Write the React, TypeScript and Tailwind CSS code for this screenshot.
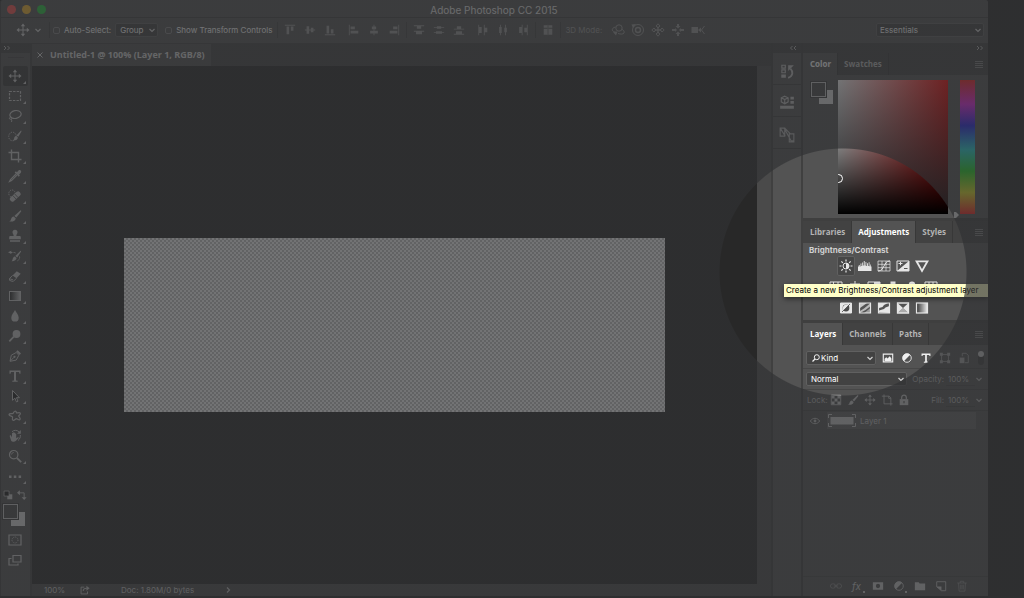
import { ReactNode } from "react";
import { clsx } from "clsx";

interface IconProps {
  children: ReactNode;
  size?: string;
  className?: string;
}

// every icon is drawn on a 14x14 grid
function Icon({ children, size = "size-3.5", className }: IconProps) {
  return (
    <svg
      viewBox="0 0 14 14"
      className={clsx("shrink-0", size, className)}
      fill="none"
      stroke="currentColor"
      strokeWidth="1"
      aria-hidden="true"
    >
      {children}
    </svg>
  );
}

const solid = { fill: "currentColor", stroke: "none" };

const movePath = (
  <>
    <path d="M7 2v10M2 7h10" />
    <path {...solid} d="M7 0.5l2.2 2.7H4.8zM7 13.5l2.2-2.7H4.8zM0.5 7l2.7-2.2v4.4zM13.5 7l-2.7-2.2v4.4z" />
  </>
);

const brushPath = (
  <>
    <path {...solid} d="M12.6 1.2c.7.4.7 1 .3 1.6L8.4 8.6 6.3 7z" />
    <path {...solid} d="M5.6 7.5l2.1 1.7c-.2 2.4-2.4 3.8-6.6 3.3 1.6-.6 1.6-1.3 2-2.6.4-1.3 1.3-2.2 2.5-2.4z" />
  </>
);

const tools: { name: string; icon: ReactNode }[] = [
  { name: "Move", icon: movePath },
  {
    name: "Marquee",
    icon: <rect x="1.5" y="2.5" width="11" height="9" strokeDasharray="2.4 1.2" strokeWidth="1.2" />,
  },
  {
    name: "Lasso",
    icon: (
      <>
        <ellipse cx="7.5" cy="5.5" rx="5.7" ry="3.9" transform="rotate(-12 7.5 5.5)" strokeWidth="1.2" />
        <path d="M2.5 8.2c-1.3.3-1.6 1.8-.2 2 1.5.2 2-1 1.2-1.5M3 10c.8.6 1 1.8.4 3" />
      </>
    ),
  },
  {
    name: "Quick Selection",
    icon: (
      <>
        <ellipse cx="4.5" cy="7.5" rx="3.8" ry="4.3" strokeDasharray="1.3 1.1" />
        <path {...solid} d="M13 1.5c.6.4.6 1 .2 1.5L10.3 7.8 8.5 6.4zM8 7l1.9 1.4c-.2 1.9-1.9 3.2-4.9 3 1.1-.7.9-1.2 1.2-2.3C6.5 8 7 7.3 8 7z" />
      </>
    ),
  },
  {
    name: "Crop",
    icon: <path d="M3.5 0.5v10h10M0.5 3.5h10v10" strokeWidth="1.4" />,
  },
  {
    name: "Eyedropper",
    icon: (
      <>
        <path d="M8 5L2.5 10.5 1.5 12.6l2.1-1L9 6.2" strokeWidth="1.2" />
        <path {...solid} d="M6.7 3.5l1.2-1.2 1 1 1.6-1.8c1-.9 2.6-.2 2.7 1.1 0 .5-.1.9-.5 1.3L11 5.5l.9 1-1.2 1.2z" />
      </>
    ),
  },
  {
    name: "Healing Brush",
    icon: (
      <>
        <ellipse cx="4" cy="4.5" rx="3.2" ry="3.5" strokeDasharray="1.2 1" />
        <rect {...solid} x="1" y="5" width="12.5" height="5" rx="2" transform="rotate(-42 7.2 7.5)" />
        <path d="M4.6 6.4l3.6 3.8M6.6 4.8l3.5 3.8" stroke="#535353" strokeWidth=".8" />
      </>
    ),
  },
  { name: "Brush", icon: brushPath },
  {
    name: "Clone Stamp",
    icon: (
      <path
        {...solid}
        d="M7 .8a2.5 2.5 0 0 1 2.5 2.5C9.5 4.9 8.3 5.3 8.3 7h3.2c.8 0 1.3.5 1.3 1.3v1.9H1.2V8.3C1.2 7.5 1.7 7 2.5 7h3.2c0-1.7-1.2-2.1-1.2-3.7A2.5 2.5 0 0 1 7 .8zM2 11.3h10v1.4H2z"
      />
    ),
  },
  {
    name: "History Brush",
    icon: (
      <>
        <path {...solid} d="M12.6 1.7c.6.4.6 1 .2 1.4L9.2 8.5 7.3 7zM6.7 7.6l1.9 1.5c-.3 2-2.2 3.4-5.3 3.2 1.2-.7 1-1.3 1.4-2.4.3-1.1 1-1.9 2-2.3zM0 3.3l3.3-1.5v3.3z" />
        <path d="M2.5 3.5h3.2c1 0 1.8.3 2.3.8M11.5 7.5c.4 1.8-.4 3.5-2 4.3" strokeDasharray="2 1" />
      </>
    ),
  },
  {
    name: "Eraser",
    icon: (
      <>
        <path d="M4.6 6.5l4.2-4.3 3.9 2.5-4.2 4.5z" {...solid} />
        <path d="M4.6 6.5L1.5 9.5v1.8l2.6 1h1.3l3.1-3.1M1.5 9.7l3.6 1.2" />
      </>
    ),
  },
  {
    name: "Gradient",
    icon: (
      <>
        <defs>
          <linearGradient id="toolGradient">
            <stop offset="0" stopColor="#222" />
            <stop offset="1" stopColor="#ccc" />
          </linearGradient>
        </defs>
        <rect x="1.5" y="2.5" width="11" height="9" fill="url(#toolGradient)" />
      </>
    ),
  },
  { name: "Blur", icon: <path {...solid} d="M7 1c1.3 2.9 3.7 4.8 3.7 7.7a3.7 3.9 0 0 1-7.4 0C3.3 5.8 5.7 3.9 7 1z" /> },
  {
    name: "Dodge",
    icon: (
      <>
        <circle {...solid} cx="8.5" cy="5" r="3.9" />
        <path d="M5.8 7.6L1.3 12.4" strokeWidth="1.7" />
      </>
    ),
  },
  {
    name: "Pen",
    icon: (
      <>
        <path d="M2 12.3L3.3 6.2 8.2 3.5l2.7 2.7-2.7 4.9zM2.3 12L6 8.3" />
        <circle {...solid} cx="6.5" cy="7.8" r="1.1" />
        <path d="M8.9 1.9l3.4 3.4" strokeWidth="2" />
      </>
    ),
  },
  {
    name: "Type",
    icon: <path {...solid} d="M1.5 1.5h11v3.3h-1l-.5-1.7H8v8.3l1.7.4v.9H4.3v-.9l1.7-.4V3.1H3l-.5 1.7h-1z" />,
  },
  {
    name: "Path Selection",
    icon: <path d="M4.5 1.5v9.8l2.3-2.2 1.7 3.8 1.5-.7-1.6-3.5h3z" fill="#1e1e1e" />,
  },
  {
    name: "Custom Shape",
    icon: (
      <path
        d="M6.5 2.5c1.3-.8 1.9.2 2 1.4.8.3 2.8-.8 3.8.2.9 1.3-1.5 1.9-1.7 2.9.2 1 2.2 2 1.5 3.4-1 1.3-2.5-.6-3.6-.8-1.3.2-2 2.1-3.5 1.7-1.5-.7-.1-2.5-.5-3.5C3.8 7 .9 7 1 5.500c.4-1.500 3-.5 3.900-1 .8-.6.7-1.500 1.600-2z"
        strokeWidth="1.2"
      />
    ),
  },
  {
    name: "Rotate View",
    icon: (
      <>
        <path {...solid} d="M3 6.5l1 2V4.3c0-.7 1-.7 1 0v2.4-3c0-.7 1-.7 1.1 0v3-2.600c0-.7 1-.7 1.100 0v3-2c0-.7 1-.7 1 0v4.200l1.500-1c.8-.3 1.300.4.8.9l-2.800 2.900c-1.100 1-3.700.9-4.500-.4L1.800 7.500C1.500 6.500 2.500 5.800 3 6.500z" />
        <path d="M4 2.7c2-1.9 5-1.7 6.9 0M12.3 6c.3 2-.5 4.2-2.3 5.5" />
        <path {...solid} d="M12.8 1v3.8H9z" />
      </>
    ),
  },
  {
    name: "Zoom",
    icon: (
      <>
        <circle cx="5.7" cy="5.7" r="4.2" strokeWidth="1.2" />
        <path d="M3.6 5.5c.1-1.1.9-1.9 2-2" />
        <path d="M8.8 8.8l4.4 4.4" strokeWidth="1.8" />
      </>
    ),
  },
  {
    name: "Edit Toolbar",
    icon: <path {...solid} d="M1 6.5h2.5V9H1zM5.8 6.5h2.5V9H5.8zM10.6 6.5h2.5V9h-2.5z" />,
  },
];

const alignGroups: ReactNode[][] = [
  [
    <path {...solid} d="M1 1h12v1H1zM3 3h3v9H3zM8 3h3v5H8z" />,
    <path {...solid} d="M1 6.5h12v1H1zM3 2.5h3v9H3zM8 4.5h3v5H8z" />,
    <path {...solid} d="M1 12h12v1H1zM3 2h3v9H3zM8 6h3v5H8z" />,
  ],
  [
    <path {...solid} d="M1 1h1v12H1zM3 3h5v3H3zM3 8h9v3H3z" />,
    <path {...solid} d="M6.5 1h1v12h-1zM4.5 3h5v3h-5zM2.5 8h9v3h-9z" />,
    <path {...solid} d="M12 1h1v12h-1zM6 3h5v3H6zM2 8h9v3H2z" />,
  ],
  [
    <path {...solid} d="M1 1.5h12v1H1zM4.5 2.5h5v3h-5zM1 8h12v1H1zM3.5 9h7v3h-7z" />,
    <path {...solid} d="M1 3.5h12v1H1zM4.5 2.5h5v3h-5zM1 9.5h12v1H1zM3.5 8.5h7v3h-7z" />,
    <path {...solid} d="M1 5.5h12v1H1zM4.5 2.5h5v3h-5zM1 11.5h12v1H1zM3.5 8.5h7v3h-7z" />,
  ],
  [
    <path {...solid} d="M1.5 1h1v12h-1zM2.5 3.5h3v7h-3zM8 1h1v12H8zM9 4.5h3v5H9z" />,
    <path {...solid} d="M3.5 1h1v12h-1zM2.5 3.5h3v7h-3zM9.5 1h1v12h-1zM8.5 4.5h3v5h-3z" />,
    <path {...solid} d="M5.5 1h1v12h-1zM2.5 3.5h3v7h-3zM11.5 1h1v12h-1zM8.5 4.5h3v5h-3z" />,
  ],
  [<path {...solid} d="M2 1.5h4.3v3H2zM7.7 1.5H12v3H7.7zM2 5.5h4.3v7H2zM7.7 5.5H12v7H7.7zM6.7 1h.6v12h-.6z" />],
];

const modeIcons: ReactNode[] = [
  <>
    <circle cx="8" cy="5" r="3.2" />
    <path d="M4.5 4C2 4.5 1 6 1.3 7c.3 1.3 2 2 4 2.5M10.5 6c2 1 3.2 2.5 2.5 4-.8 1.4-3.5 1.3-6 .5" />
    <path {...solid} d="M2 9l4.5-.5-1.5 4z" />
  </>,
  <>
    <circle cx="7" cy="7" r="5.5" />
    <circle cx="7" cy="7" r="2.5" strokeWidth="1.4" />
    <path {...solid} d="M0.5 1.5L5 1 2 5z" />
  </>,
  <>
    <path d="M7 3.5v7M3.5 7h7" strokeWidth="1.4" />
    <path d="M7 .8l2 2.2-2 2-2-2zM7 13.2l2-2.2-2-2-2 2zM.8 7L3 5l2 2-2 2zM13.2 7L11 5 9 7l2 2z" />
  </>,
  <path {...solid} d="M7 5.5L4.5 3H6V1h2v2h1.5zM7 8.5L4.5 11H6v2h2v-2h1.5zM1 6h3v2H1zM10 6h3v2h-3zM4 5l2 2-2 2zM10 5L8 7l2 2z" />,
  <>
    <path {...solid} d="M.5 4h6.5v6H.5zM7 7l3-2.5v5z" />
    <path d="M13.5 3l-3 4 3 4" />
  </>,
];

const adjustments: { name: string; icon: ReactNode }[][] = [
  [
    {
      name: "Brightness/Contrast",
      icon: (
        <>
          <circle cx="7" cy="7" r="3" />
          <path {...solid} d="M7 4a3 3 0 0 1 0 6z" />
          <path d="M7 .5v2M7 11.5v2M.5 7h2M11.5 7h2M2.4 2.4l1.4 1.4M10.2 10.2l1.4 1.4M2.4 11.6l1.4-1.4M10.2 3.8l1.4-1.4" strokeWidth="1.2" />
        </>
      ),
    },
    {
      name: "Levels",
      icon: <path {...solid} d="M0 12V7.5h.8V6h.9v1.500h.8V4.500h.9v2.500h.8V3.500h.9v3h.7V2h.9v4.500h.8V3h.8v4h.7V4.200h.9v2.800h.8V3.200h.8v4h.7V5.500h.7v2h.6V12z" />,
    },
    {
      name: "Curves",
      icon: (
        <>
          <path d="M1 2h12v10H1zM5 2v10M9 2v10M1 5.3h12M1 8.7h12" strokeWidth=".7" />
          <path d="M1 12c7 0 5-10 12-10" />
        </>
      ),
    },
    {
      name: "Exposure",
      icon: (
        <>
          <path d="M1 2h12v10H1z" />
          <path {...solid} d="M13 2v10H1zM2.5 4h4v1h-4zM4 2.7h1v3.6H4z" />
          <path d="M8 9.5h3.5" stroke="#535353" />
        </>
      ),
    },
    { name: "Vibrance", icon: <path d="M1.5 2.3h11L7 12z" strokeWidth="1.8" /> },
  ],
  [
    { name: "Hue/Saturation", icon: <path d="M1 2h12v10H1zM1 7h12M4.5 2v5M9 2v5" /> },
    { name: "Color Balance", icon: <path d="M7 1v10M2 4h10M1 8l1.5-4L4 8zM10 8l1.5-4L13 8zM4 11.5h6" /> },
    {
      name: "Black & White",
      icon: (
        <>
          <path d="M1 2h12v10H1z" />
          <path {...solid} d="M7 2h6v10H7z" />
        </>
      ),
    },
    { name: "Photo Filter", icon: <path {...solid} d="M4.5 1.5h5v3h3v7h-11v-7h3z" /> },
    {
      name: "Channel Mixer",
      icon: (
        <>
          <circle cx="7" cy="4.7" r="3.2" {...solid} />
          <circle cx="4.5" cy="9" r="3" />
          <circle cx="9.5" cy="9" r="3" />
        </>
      ),
    },
    { name: "Color Lookup", icon: <path d="M1 2h12v10H1zM5 2v10M9 2v10M1 5.3h12M1 8.7h12" /> },
  ],
  [
    {
      name: "Invert",
      icon: (
        <>
          <path d="M1.5 2h11v10h-11z" fill="currentColor" />
          <circle cx="7" cy="7" r="3.4" fill="#4a4a4a" stroke="none" />
          <path {...solid} d="M9.4 4.6A3.4 3.4 0 0 0 4.6 9.4z" />
          <path d="M11 3L3 11" stroke="#4a4a4a" strokeWidth=".8" />
        </>
      ),
    },
    {
      name: "Posterize",
      icon: (
        <>
          <path d="M1.5 2h11v10h-11z" strokeWidth="1.2" />
          <path {...solid} d="M2 10l4-2.5L12 2.5v3L7.5 9 2 12z" opacity=".7" />
          <path {...solid} d="M2 2h7L2 7z" opacity=".8" />
          <path {...solid} d="M12.5 7v5H6z" opacity=".5" />
        </>
      ),
    },
    {
      name: "Threshold",
      icon: (
        <>
          <path d="M1.5 2h11v10h-11z" strokeWidth="1.2" />
          <path {...solid} d="M2 2h9L7 4 5.5 6 2 7zM2 11.5v-2l5-1.5 1.5-1.5L12.5 5v7z" />
        </>
      ),
    },
    {
      name: "Selective Color",
      icon: (
        <>
          <path d="M1.5 2h11v10h-11z" strokeWidth="1.3" />
          <path {...solid} d="M1.5 2L7 7 1.5 12zM12.5 2L7 7l5.5 5z" />
          <path {...solid} d="M1.5 12L7 7l5.5 5z" opacity=".6" />
        </>
      ),
    },
    {
      name: "Gradient Map",
      icon: (
        <>
          <defs>
            <linearGradient id="mapGradient">
              <stop offset="0" stopColor="#333" />
              <stop offset="1" stopColor="#eee" />
            </linearGradient>
          </defs>
          <rect x="1.5" y="2" width="11" height="10" fill="url(#mapGradient)" strokeWidth="1.2" />
        </>
      ),
    },
  ],
];

const halfCircle = (
  <>
    <circle cx="7" cy="7" r="5" />
    <path {...solid} d="M10.7 3.3L3.3 10.7A5.2 5.2 0 0 1 10.7 3.3z" />
  </>
);

const filters: { name: string; icon: ReactNode; off?: boolean }[] = [
  {
    name: "Pixel layers",
    icon: (
      <>
        <path d="M1.5 2.5h11v9h-11z" strokeWidth="1.3" />
        <path {...solid} d="M3 10.5V8l2-2 1.5 1.5L9 5l2 2.5v3z" />
      </>
    ),
  },
  { name: "Adjustment layers", icon: halfCircle },
  {
    name: "Type layers",
    icon: <path {...solid} d="M1.8 1.8h10.4v3h-1l-.6-1.4H8v7.7l1.5.4v.9h-5v-.9l1.5-.4V3.4H3.4l-.6 1.4h-1z" />,
  },
  {
    name: "Shape layers",
    off: true,
    icon: (
      <>
        <path d="M3 3h8v8H3z" />
        <path {...solid} d="M1 1h3.5v3.5H1zM9.5 1H13v3.5H9.5zM1 9.5h3.5V13H1zM9.5 9.5H13V13H9.5z" />
      </>
    ),
  },
  {
    name: "Smart objects",
    off: true,
    icon: (
      <>
        <path d="M5 5V1.5h4.5l2.5 2.5v8.5H8" />
        <path {...solid} d="M2 6.5h5.5V13H2z" />
      </>
    ),
  },
];

const locks: { name: string; icon: ReactNode }[] = [
  {
    name: "Lock transparent pixels",
    icon: (
      <>
        <path d="M1.5 1.5h11v11h-11z" />
        <path {...solid} d="M2 2h3.3v3.3H2zM8.7 2H12v3.3H8.7zM5.3 5.3h3.4v3.4H5.3zM2 8.7h3.3V12H2zM8.7 8.7H12V12H8.7z" />
      </>
    ),
  },
  { name: "Lock image pixels", icon: brushPath },
  { name: "Lock position", icon: movePath },
  {
    name: "Lock artboard nesting",
    icon: <path d="M3.5 0.5v11M1 2.5h8.5l2 2v9M13.5 11.5H3.5M9 2.5V5h2.5" />,
  },
  {
    name: "Lock all",
    icon: (
      <>
        <path d="M4.3 6V4a2.7 2.7 0 0 1 5.4 0v2" strokeWidth="1.4" />
        <path {...solid} d="M2 6h10v7H2z" />
        <path d="M7 8.3v2.4" stroke="#535353" strokeWidth="1.3" />
      </>
    ),
  },
];

const layerActions: { name: string; icon: ReactNode; dim?: boolean; menu?: boolean }[] = [
  {
    name: "Link layers",
    dim: true,
    icon: (
      <>
        <rect x="0.5" y="4.5" width="6" height="5" rx="2.5" />
        <rect x="7.5" y="4.5" width="6" height="5" rx="2.5" />
        <path d="M4.5 7h5" />
      </>
    ),
  },
  { name: "Layer style", icon: null, menu: true },
  {
    name: "Add mask",
    icon: <path fillRule="evenodd" {...solid} d="M1 2.5h12v9H1zM7 4.5a2.5 2.5 0 1 0 0 5 2.5 2.5 0 0 0 0-5z" />,
  },
  { name: "New adjustment layer", icon: halfCircle, menu: true },
  { name: "New group", icon: <path {...solid} d="M1 2.5h4.5l1 1.5H13v8H1z" /> },
  {
    name: "New layer",
    icon: (
      <>
        <path d="M2 2h10.5v10.5H7.5L2 8z" />
        <path {...solid} d="M2 7.5h5.5v5z" />
      </>
    ),
  },
  {
    name: "Delete layer",
    dim: true,
    icon: <path d="M1.5 3.5h11M5 3.5v-2h4v2M3 3.5l.6 9.5h6.8L11 3.5M5.5 5.5V11M7 5.5V11M8.5 5.5V11" />,
  },
];

function Chevron({ className }: { className?: string }) {
  return (
    <svg viewBox="0 0 8 8" className={clsx("pointer-events-none size-2 shrink-0", className)} fill="none" stroke="currentColor" strokeWidth="1.2" aria-hidden="true">
      <path d="M1.5 3L4 5.5 6.5 3" />
    </svg>
  );
}

function Collapse({ left }: { left?: boolean }) {
  return (
    <svg viewBox="0 0 8 6" className={clsx("h-1.5 w-2 text-[#b0b0b0]", left && "rotate-180")} fill="none" stroke="currentColor" aria-hidden="true">
      <path d="M1 1l2 2-2 2M4.5 1l2 2-2 2" />
    </svg>
  );
}

interface DropdownProps {
  id: string;
  label: string;
  options: string[];
  className?: string;
  indent?: string;
}

function Dropdown({ id, label, options, className, indent = "pl-1" }: DropdownProps) {
  return (
    <div className={clsx("relative flex h-3.5 items-center", className)}>
      <select
        id={id}
        aria-label={label}
        className={clsx(
          "h-full w-full appearance-none rounded-[2px] border border-[#606060] bg-[#424242] text-[8px] leading-3 text-white outline-none",
          indent
        )}
      >
        {options.map((option) => (
          <option key={option}>{option}</option>
        ))}
      </select>
      <Chevron className="absolute right-0.5 text-[#d0d0d0]" />
    </div>
  );
}

function PanelTabs({ tabs, active }: { tabs: string[]; active: string }) {
  return (
    <div role="tablist" className="flex h-[22px] bg-[#424242] font-['Open_Sans','Noto_Sans',sans-serif] text-[8px] font-bold">
      {tabs.map((tab) => (
        <button
          key={tab}
          role="tab"
          aria-selected={tab === active}
          className={clsx(
            "border-r border-[#383838] px-1.5 first:pl-[7px]",
            tab === active ? "bg-[#535353] text-white" : "text-[#b4b4b4]"
          )}
        >
          {tab}
        </button>
      ))}
      <button aria-label="Panel menu" className="mr-[5px] ml-auto self-center">
        <svg viewBox="0 0 8 7" className="h-[7px] w-2" stroke="#7c7c7c" aria-hidden="true">
          <path d="M0 .5h8M0 2.5h8M0 4.5h8M0 6.5h8" />
        </svg>
      </button>
    </div>
  );
}

function TitleBar() {
  return (
    <header className="flex h-[18px] items-center border-b border-[#404040] bg-[#535353] pt-0.5 pl-1.5">
      <div className="flex gap-1.5">
        <button aria-label="Close" className="size-[9px] rounded-full bg-[#f9534f]" />
        <button aria-label="Minimize" className="size-[9px] rounded-full bg-[#efb32e]" />
        <button aria-label="Zoom" className="size-[9px] rounded-full bg-[#27c33f]" />
      </div>
      <h1 className="flex-1 pr-[46px] text-center text-[10px] leading-4 text-[#e4e4e4]">Adobe Photoshop CC 2015</h1>
    </header>
  );
}

function Divider() {
  return <div className="h-4 w-px shrink-0 bg-[#444]" />;
}

function OptionsBar() {
  return (
    <div className="flex h-[25px] items-center bg-[#535353] pb-px text-[8px] text-white">
      <div className="flex w-12 items-center gap-1 pl-[15px] text-[#d0d0d0]">
        <Icon>{movePath}</Icon>
        <Chevron />
      </div>
      <Divider />
      <label className="ml-[3px] flex items-center gap-1">
        <input type="checkbox" className="size-[7px] appearance-none rounded-[2px] border border-[#808080]" />
        Auto-Select:
      </label>
      <Dropdown id="select-target" label="Auto-select target" options={["Group", "Layer"]} className="ml-1 w-[43px]" />
      <label className="ml-[7px] flex items-center gap-1">
        <input type="checkbox" className="size-[7px] appearance-none rounded-[2px] border border-[#808080]" />
        Show Transform Controls
      </label>
      <div className="ml-[5px] flex items-center text-[#969696]">
        <Divider />
        {alignGroups.map((group, i) => (
          <div key={i} className="flex items-center">
            <div className="flex px-0.5">
              {group.map((icon, j) => (
                <button key={j} aria-label={`Align ${i + 1}.${j + 1}`} className="grid w-5 place-items-center">
                  <Icon size="size-3">{icon}</Icon>
                </button>
              ))}
            </div>
            {(i === 1 || i >= 3) && <Divider />}
          </div>
        ))}
        <span className="ml-1">3D Mode:</span>
        <div className="ml-1.5 flex">
          {modeIcons.map((icon, i) => (
            <button key={i} aria-label={`3D mode ${i + 1}`} className="grid w-5 place-items-center">
              <Icon>{icon}</Icon>
            </button>
          ))}
        </div>
      </div>
      <Dropdown id="workspace" label="Workspace" options={["Essentials", "3D", "Painting"]} className="mr-1 ml-auto w-[108px]" indent="pl-[3px]" />
    </div>
  );
}

function Toolbar() {
  return (
    <aside className="flex w-[31px] shrink-0 flex-col border-r-2 border-[#424242] bg-[#535353] text-[#c8c8c8]">
      <div className="flex h-2.5 items-center bg-[#424242] pl-0.5">
        <Collapse />
      </div>
      <div className="mx-auto mt-1 mb-2 h-px w-4 bg-[#454545]" />
      {tools.map((tool, i) => (
        <button
          key={tool.name}
          aria-label={tool.name}
          className={clsx("relative mx-0.5 grid h-5 place-items-center rounded-[2px] pr-0.5", i === 0 && "bg-[#3a3a3a]")}
        >
          <Icon>{tool.icon}</Icon>
          <svg viewBox="0 0 3 3" className="absolute right-0.5 bottom-0.5 size-[3px]" fill="currentColor" aria-hidden="true">
            <path d="M3 0v3H0z" />
          </svg>
        </button>
      ))}
      <div className="mt-1 flex h-2.5 items-center justify-center gap-1 pr-0.5">
        <Icon size="size-2.5">
          <path {...solid} d="M6 6h7v7H6z" />
          <path d="M1.5 1.5h7v7h-7z" fill="#1e1e1e" />
        </Icon>
        <Icon size="size-2.5">
          <path d="M3 4h7v7" strokeWidth="1.3" />
          <path {...solid} d="M0 4l4-3.5v7zM10 14L6.5 10h7z" />
        </Icon>
      </div>
      <Swatches className="mt-1 ml-0.5" />
      <button aria-label="Quick mask" className="mt-1 grid h-5 place-items-center pr-0.5">
        <Icon>
          <path d="M1 2h12v10H1z" strokeWidth="1.2" />
          <circle cx="7" cy="7" r="3" strokeDasharray="1 1" />
        </Icon>
      </button>
      <button aria-label="Screen mode" className="grid h-5 place-items-center pr-0.5">
        <Icon>
          <path d="M5 2.5h8v6.5H5zM3.5 5.5H1V12h9v-1.5" strokeWidth="1.2" />
        </Icon>
      </button>
    </aside>
  );
}

function Swatches({ className }: { className?: string }) {
  return (
    <div className={clsx("grid size-[22px] shrink-0 grid-cols-1", className)}>
      <div className="col-start-1 row-start-1 size-3.5 self-end justify-self-end bg-[#dcdcdc]" />
      <div className="col-start-1 row-start-1 size-[15px] border border-[#c2c2c2] bg-[#4a4a4a] outline outline-[#3c3c3c]" />
    </div>
  );
}

function DocumentArea() {
  return (
    <main className="flex min-w-0 flex-1 flex-col">
      <div className="flex h-[23px] bg-[#424242] pt-px">
        <div className="flex items-center bg-[#505050] pr-1.5 pl-[5px] font-['Open_Sans','Noto_Sans',sans-serif] text-[9px] font-bold text-[#d4d4d4]">
          <button aria-label="Close tab" className="mr-[7px]">
            <svg viewBox="0 0 6 6" className="size-1.5" stroke="currentColor" aria-hidden="true">
              <path d="M.5.5l5 5M5.5.5l-5 5" />
            </svg>
          </button>
          Untitled-1 @ 100% (Layer 1, RGB/8)
        </div>
      </div>
      <div className="flex flex-1">
        <div className="grid flex-1 place-items-center bg-[#282828] pb-px">
          <div className="h-[174px] w-[541px] bg-[repeating-conic-gradient(#cbcbcb_0_25%,#ffffff_0_50%)] bg-size-[4px_4px]" />
        </div>
        <div className="w-3.5 bg-[#4a4a4a]" />
      </div>
      <footer className="flex h-3 items-center bg-[#4a4a4a] pl-3 text-[8px] leading-3 text-[#c0c0c0]">
        <span className="w-9">100%</span>
        <Icon size="size-2.5">
          <path d="M6 3H1.5v9.5h9V9" strokeWidth="1.3" />
          <path d="M4.5 8.5c0-3 2-4 5-4" strokeWidth="1.5" />
          <path {...solid} d="M9 1l4.5 3.5L9 8z" />
        </Icon>
        <span className="ml-[31px] w-[103px]">Doc: 1.80M/0 bytes</span>
        <Chevron className="-rotate-90" />
      </footer>
    </main>
  );
}

function IconDock() {
  return (
    <aside className="flex w-8 shrink-0 flex-col border-x-2 border-[#404040] bg-[#535353] text-[#bdbdbd]">
      <div className="flex h-2.5 items-center justify-end bg-[#424242] pr-1">
        <Collapse left />
      </div>
      <button aria-label="History" className="grid h-8 place-items-center border-b border-[#404040] pt-1">
        <Icon size="size-4">
          <path d="M2.5 2h3v2.5h-3zM2.5 6h3v2.5h-3z" />
          <path d="M8 13c4.500-1.500 4.500-5.500 2-8" strokeWidth="1.6" />
          <path {...solid} d="M2 10h4v3H2zM8 7V2h5z" />
        </Icon>
      </button>
      <button aria-label="3D materials" className="grid h-8 place-items-center border-b border-[#404040] pt-1">
        <Icon size="size-4">
          <path d="M5 1l3 1.5V6L5 7.7 2 6V2.5zM2 2.5L5 4l3-1.5M5 4v3.5" />
          <path {...solid} d="M10 1.5h3V4h-3zM10 5.2h3v2.5h-3zM1 9.5h12V12H1z" />
        </Icon>
      </button>
      <button aria-label="Device preview" className="grid h-8 place-items-center border-b border-[#404040] pt-1 text-[#b0b0b0]">
        <Icon size="size-4">
          <path d="M1 1h4v7H1zM9 6h4v7H9zM1 1l4.5 7M4.5 1l6 11H13M5 1l5 5" />
        </Icon>
      </button>
    </aside>
  );
}

function ColorPanel() {
  return (
    <section>
      <PanelTabs tabs={["Color", "Swatches"]} active="Color" />
      <div className="flex h-[143px] items-start pt-[5px] pr-[13px] pl-2">
        <Swatches className="mt-0.5 mr-[5px]" />
        <div className="relative h-[134px] flex-1 overflow-hidden bg-[linear-gradient(to_top,#000,transparent),linear-gradient(to_right,#fff,#f00000)]">
          <div className="absolute top-[94px] -left-1 size-[9px] rounded-full border border-white" />
        </div>
        <svg viewBox="0 0 5 6" className="ml-1.5 h-1.5 w-[5px] self-end" fill="#e0e0e0" aria-hidden="true">
          <path d="M0 0h2l3 3-3 3H0z" />
        </svg>
        <div className="ml-px h-[134px] w-[15px] bg-[linear-gradient(to_bottom,#f02020,#e020e0_18%,#2020e0_34%,#20d0d0_52%,#20d020_68%,#d8d820_84%,#f02020)]" />
      </div>
    </section>
  );
}

function AdjustmentsPanel() {
  return (
    <section className="relative border-t-[3px] border-[#3f3f3f]">
      <PanelTabs tabs={["Libraries", "Adjustments", "Styles"]} active="Adjustments" />
      <div className="h-[77px] px-1.5 pt-0.5 text-[#e6e6e6]">
        <h2 className="text-[8px] leading-[11px] font-bold text-[#d0d0d0]">Brightness/Contrast</h2>
        <div className="flex flex-col gap-px pr-6">
          {adjustments.map((row, i) => (
            <div key={i} className="flex justify-center gap-px">
              {row.map((item) => (
                <button
                  key={item.name}
                  aria-label={item.name}
                  className={clsx(
                    "grid h-5 w-[18px] place-items-center rounded-[2px]",
                    item.name === "Brightness/Contrast" && "bg-[#464646] inset-ring inset-ring-[#606060]"
                  )}
                >
                  <Icon>{item.icon}</Icon>
                </button>
              ))}
            </div>
          ))}
        </div>
      </div>
      <div
        role="tooltip"
        className="absolute top-[63px] right-0 h-[13px] w-[204px] bg-[#ffffc8] pl-0.5 text-[8px] leading-[13px] whitespace-nowrap text-black shadow-[0_2px_5px_rgba(0,0,0,0.5)]"
      >
        Create a new Brightness/Contrast adjustment layer
      </div>
    </section>
  );
}

function ValueField({ id, label, className }: { id: string; label: string; className?: string }) {
  return (
    <div className={clsx("flex items-center text-[#b4b4b4]", className)}>
      <label htmlFor={id}>{label}</label>
      <input
        id={id}
        defaultValue="100%"
        className="ml-0.5 h-3.5 w-[29px] border-b border-[#484848] bg-transparent pl-0.5 text-[8px] outline-none"
      />
      <Chevron className="mr-[5px] text-[#b0b0b0]" />
    </div>
  );
}

function LayersPanel() {
  return (
    <section className="flex flex-1 flex-col border-t-[3px] border-[#3f3f3f] text-[8px]">
      <PanelTabs tabs={["Layers", "Channels", "Paths"]} active="Layers" />
      <div className="flex h-6 items-center border-b border-[#474747] pt-[3px] pl-[3px] text-[#f0f0f0]">
        <div className="relative">
          <Dropdown id="filter-kind" label="Filter layers by" options={["Kind", "Name", "Effect"]} className="w-[70px]" indent="pl-3.5" />
          <svg viewBox="0 0 8 8" className="pointer-events-none absolute top-[3px] left-1.5 size-2" fill="none" stroke="currentColor" aria-hidden="true">
            <circle cx="4.8" cy="3.2" r="2.5" />
            <path d="M3 5L.5 7.5" strokeWidth="1.3" />
          </svg>
        </div>
        <div className="ml-0.5 flex">
          {filters.map((filter) => (
            <button key={filter.name} aria-label={filter.name} className={clsx("grid w-[19px] place-items-center", filter.off && "text-[#a0a0a0]")}>
              <Icon size="size-3">{filter.icon}</Icon>
            </button>
          ))}
        </div>
        <button aria-label="Toggle filtering" className="mr-1 ml-auto h-3.5 w-1.5 rounded-full bg-[#404040]">
          <span className="mb-2 block size-1.5 rounded-full bg-[#c0c0c0]" />
        </button>
      </div>
      <div className="flex h-[21px] items-center border-b border-[#474747] pl-[3px]">
        <Dropdown id="blend-mode" label="Blend mode" options={["Normal", "Dissolve", "Multiply"]} className="w-[101px]" />
        <ValueField id="opacity" label="Opacity:" className="ml-auto" />
      </div>
      <div className="flex h-[21px] items-center border-b border-[#474747] pl-1 text-[#b4b4b4]">
        <span>Lock:</span>
        <div className="flex text-[#c8c8c8]">
          {locks.map((lock) => (
            <button key={lock.name} aria-label={lock.name} className="grid w-[17px] place-items-center">
              <Icon size="size-3">{lock.icon}</Icon>
            </button>
          ))}
        </div>
        <ValueField id="fill" label="Fill:" className="ml-auto" />
      </div>
      <ul className="flex-1 pt-px">
        <li className="mr-3 flex h-[17px] items-center">
          <button aria-label="Toggle visibility" className="grid w-6 place-items-center text-[#b8b8b8]">
            <Icon size="size-2.5">
              <path d="M.5 7c3-5 10-5 13 0-3 5-10 5-13 0z" strokeWidth="1.4" />
              <circle cx="7" cy="7" r="2" {...solid} />
            </Icon>
          </button>
          <div className="flex h-full flex-1 items-center bg-[#636363]">
            <svg viewBox="0 0 28 13" className="ml-px h-[13px] w-7" fill="none" stroke="#c8c8c8" aria-hidden="true">
              <path d="M4 .5H.5V4M24 .5h3.5V4M.5 9v3.5H4M27.5 9v3.5H24" />
              <rect x="2.5" y="3" width="23" height="7.5" fill="#c8c8c8" stroke="none" />
            </svg>
            <span className="ml-1 text-[#c4c4c4]">Layer 1</span>
          </div>
        </li>
      </ul>
      <div className="flex h-5 items-center justify-center border-t border-[#484848] pb-px pl-1.5 text-[#c8c8c8]">
        {layerActions.map((action) => (
          <button key={action.name} aria-label={action.name} className={clsx("relative grid w-[21px] place-items-center", action.dim && "text-[#8c8c8c]")}>
            {action.icon ? (
              <Icon size="size-3">{action.icon}</Icon>
            ) : (
              <span className="text-[10px] leading-3 italic">fx</span>
            )}
            {action.menu && <span className="absolute right-0.5 -bottom-px size-0.5 bg-current" />}
          </button>
        ))}
      </div>
    </section>
  );
}

function App() {
  return (
    <div className="relative flex min-h-screen flex-col bg-[#2a2a2a] pr-9 pb-0.5 font-['Inter','Liberation_Sans',sans-serif]">
      <div className="flex flex-1 flex-col overflow-hidden rounded-t-[3px] border-l border-[#404040] bg-[#535353]">
        <TitleBar />
        <OptionsBar />
        <div className="flex flex-1">
          <Toolbar />
          <DocumentArea />
          <IconDock />
          <div className="flex w-[185px] shrink-0 flex-col">
            <div className="flex h-2.5 items-center justify-end bg-[#424242] pr-1">
              <Collapse />
            </div>
            <ColorPanel />
            <AdjustmentsPanel />
            <LayersPanel />
          </div>
        </div>
      </div>
      {/* spotlight: dims everything but a circle over the adjustments */}
      <div className="pointer-events-none absolute inset-0 bg-[radial-gradient(circle_at_calc(100%-181px)_272px,transparent_123px,rgba(48,49,51,0.68)_124px)]" />
    </div>
  );
}

export default App;
